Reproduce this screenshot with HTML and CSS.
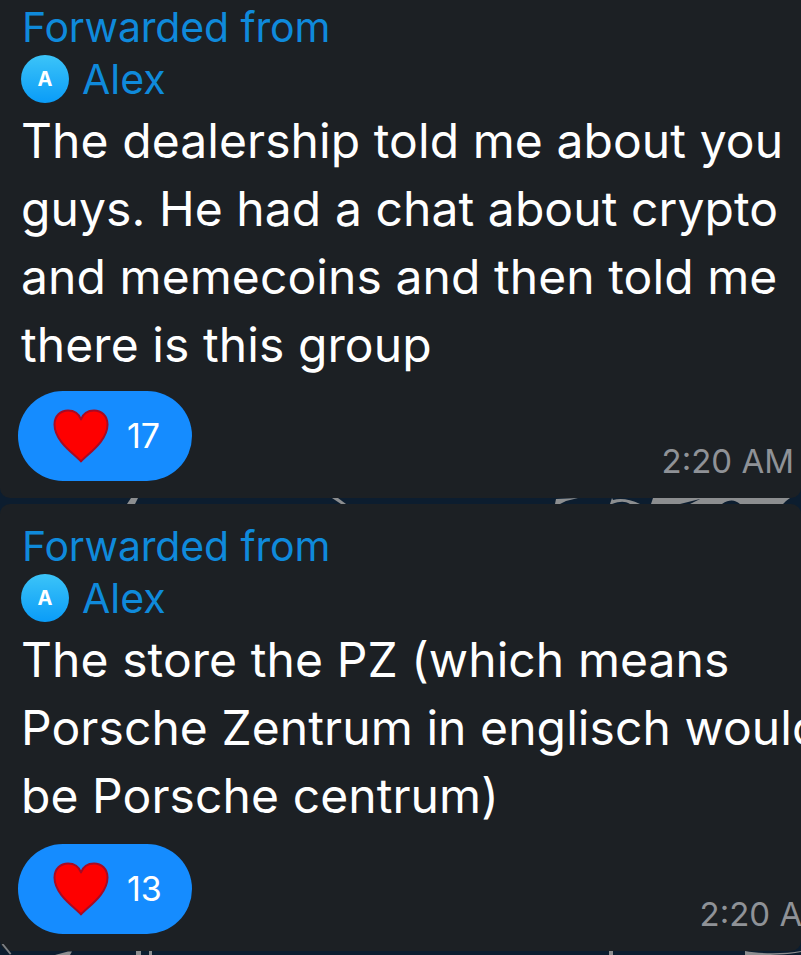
FILE: index.html
```html
<!DOCTYPE html>
<html lang="en">
<head>
<meta charset="utf-8">
<title>Forwarded messages</title>
<link rel="stylesheet" href="styles.css">
</head>
<body>
<main class="chat">
  <article class="bubble bubble-first">
    <p class="fwd">Forwarded from</p>
    <p class="sender"><span class="avatar">A</span>Alex</p>
    <p class="body">The dealership told me about you<br>guys. He had a chat about crypto<br>and memecoins and then told me<br>there is this group</p>
    <div class="foot">
      <div class="reaction">
        <svg class="heart" viewBox="0 0 56 54"><path d="M28 52.500C23 46 1.500 33 1.500 15.500C1.500 7 7.500 1.500 15 1.500C21 1.500 26 5 28 10.500C30 5 35 1.500 41 1.500C48.500 1.500 54.500 7 54.500 15.500C54.500 33 33 46 28 52.500Z"/></svg>
        <span class="count">17</span>
      </div>
      <time class="stamp">2:20 AM</time>
    </div>
  </article>
  <div class="wallpaper">
    <svg class="wall-art" viewBox="0 0 801 6" preserveAspectRatio="none">
      <path d="M127 6L131 0H138L135 6Z"/>
      <path d="M332 0H338L346 6H341Z"/>
      <path d="M555 6L556 1L578 0L566 3L560 6Z"/>
      <path d="M610 6L612 0L613 2C620 0 630 1 640 6H630C625 3 620 3 612 6Z"/>
      <path d="M651 6L653 0H790L786 3L783 6H740C735 2 730 1 722 6H690L700 1L680 6Z"/>
    </svg>
  </div>
  <article class="bubble bubble-second">
    <p class="fwd">Forwarded from</p>
    <p class="sender"><span class="avatar">A</span>Alex</p>
    <p class="body">The store the PZ (which means<br>Porsche Zentrum in englisch would<br>be Porsche centrum)</p>
    <div class="foot">
      <div class="reaction">
        <svg class="heart" viewBox="0 0 56 54"><path d="M28 52.500C23 46 1.500 33 1.500 15.500C1.500 7 7.500 1.500 15 1.500C21 1.500 26 5 28 10.500C30 5 35 1.500 41 1.500C48.500 1.500 54.500 7 54.500 15.500C54.500 33 33 46 28 52.500Z"/></svg>
        <span class="count">13</span>
      </div>
      <time class="stamp stamp-cut">2:20 AM</time>
    </div>
  </article>
  <div class="wallpaper wallpaper-end">
    <svg class="wall-art wall-art-end" viewBox="0 0 801 4" preserveAspectRatio="none">
      <path d="M55 4L68 0.500L72 0.500L70 4Z"/>
      <path d="M136 4V0H141V4Z"/>
      <path d="M149 4V0H152V4Z"/>
      <path d="M609 4V0H613V4Z"/>
      <path d="M745 4V0C760 3 785 3 801 0V1C785 4 770 4 760 4H748V4Z"/>
    </svg>
  </div>
</main>
<svg class="corner-stroke" viewBox="0 0 14 12"><path d="M2 0L11 11"/></svg>
</body>
</html>
```

FILE: styles.css
```css
* { box-sizing: border-box; }

html, body {
  margin: 0;
  height: 100%;
  overflow: hidden;
  background: #0c1d2f;
}

.chat {
  width: 801px;
  height: 955px;
  overflow: hidden;
  font-family: Inter, "Liberation Sans", sans-serif;
}

.bubble {
  position: relative;
  z-index: 1;
  background: #1c2024;
  padding: 16px 0 0 22px;
  overflow: hidden;
  white-space: nowrap;
  border-radius: 10px;
}

.bubble-first {
  height: 513px;
  margin-top: -15px;
}

.bubble-second {
  height: 447px;
}

.fwd, .sender, .body { margin: 0; }

.fwd {
  color: #0f8adb;
  font-size: 41px;
  letter-spacing: -0.15px;
  line-height: 52px;
  height: 52px;
}

.sender {
  display: flex;
  align-items: center;
  gap: 13px;
  margin-left: -1px;
  color: #0f8adb;
  font-size: 41px;
  line-height: 52px;
  height: 52px;
}

.avatar {
  width: 48px;
  height: 48px;
  border-radius: 50%;
  background: linear-gradient(#3cc4f8, #0a9cf8);
  color: #fff;
  font-size: 20px;
  font-weight: 700;
  letter-spacing: 0;
  display: flex;
  align-items: center;
  justify-content: center;
}

.body {
  color: #fff;
  font-size: 48px;
  letter-spacing: 0.08px;
  line-height: 68px;
  margin-top: 2px;
  margin-left: -1px;
}

.foot {
  display: flex;
  justify-content: space-between;
  align-items: flex-end;
  margin-left: -4px;
  margin-top: 12px;
}

.bubble-second .foot { margin-top: 14px; }

.reaction {
  width: 174px;
  height: 90px;
  border-radius: 45px;
  background: #158cff;
  display: flex;
  align-items: center;
  padding-left: 35px;
  gap: 18px;
  flex: none;
}

.heart {
  width: 56px;
  height: 54px;
}

.heart path {
  fill: #fe0000;
  stroke: #a80a24;
  stroke-width: 2;
  stroke-linejoin: round;
}

.count {
  color: #fff;
  font-size: 34px;
  margin-top: -2px;
}

.stamp {
  color: #8f9297;
  font-size: 33px;
  line-height: 40px;
  padding-right: 7px;
  flex: none;
}

.stamp-cut {
  padding-right: 0;
  margin-right: -31px;
}

.wallpaper {
  height: 6px;
  background: #0c1d2f;
}

.wall-art {
  display: block;
  width: 801px;
  height: 6px;
}

.wall-art path { fill: #8c8e90; }

.wallpaper-end { height: 4px; }

.wall-art-end { height: 4px; }

/* wallpaper line crossing the bottom corner of the last message */
.corner-stroke {
  position: absolute;
  left: 0;
  top: 944px;
  width: 14px;
  height: 11px;
  z-index: 2;
}

.corner-stroke path {
  fill: none;
  stroke: #7d8084;
  stroke-width: 2;
}
```
